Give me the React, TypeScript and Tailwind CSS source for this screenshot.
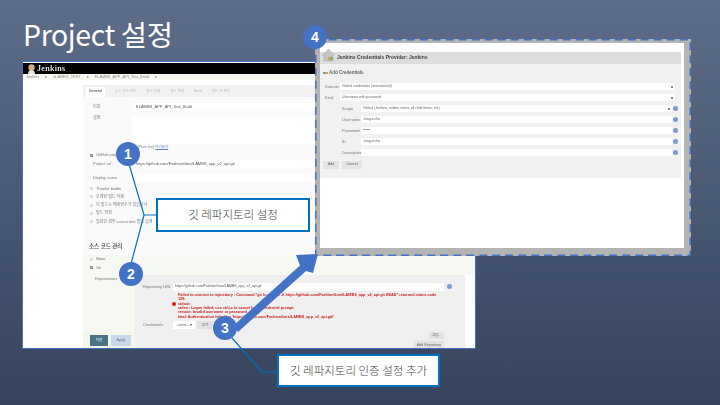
const KR = "font-['Liberation_Sans','Noto_Sans_CJK_KR',sans-serif]";

function Field({ label, value, h = "h-[8px]", top = "mt-0" }: { label: string; value?: string; h?: string; top?: string }) {
  return (
    <div className={`flex items-center ${top}`}>
      <span className="w-[50px] pl-[10px] text-[4px] text-[#777]">{label}</span>
      <div className={`flex flex-1 items-center bg-white px-[3px] text-[4px] text-[#555] ${h}`}>{value}</div>
    </div>
  );
}

function Check({ label, checked }: { label: string; checked?: boolean }) {
  return (
    <div className="flex h-[8.3px] items-center gap-[3px] pl-[7px] text-[4px] text-[#777]">
      <span className={`size-[3px] ${checked ? "bg-[#999]" : "bg-[#ddd]"}`} />
      {label}
    </div>
  );
}

function JenkinsConfig() {
  return (
    <div className="absolute left-[22px] top-[61px] flex h-[288px] w-[454px] flex-col overflow-hidden border border-[#4472c4] bg-white blur-[0.4px]">
      <div className="mt-[1px] flex h-[11px] items-center gap-[1px] bg-black pl-[4px] font-['Liberation_Serif',serif] text-[8px] font-bold tracking-[0.3px] text-[#ddd]">
        <svg width="9" height="10" viewBox="0 0 9 10">
          <circle cx="4.5" cy="3.5" r="3.2" fill="#d2ab86" />
          <path d="M1 10 C1 7 2.5 6 4.5 6 C6.5 6 8 7 8 10 Z" fill="#e8e4dc" />
        </svg>
        Jenkins
      </div>
      <div className="flex h-[7px] items-center gap-[6px] bg-[#f4f8f0] pl-[3px] text-[3.9px] text-[#888]">
        <span>Jenkins</span>
        <span>▸</span>
        <span>eLAMBS_TEST</span>
        <span>▸</span>
        <span>ELAMBS_APP_API_Test_Build</span>
        <span>▸</span>
      </div>
      <div className="flex flex-1">
        <div className="w-[60px]" />
        <div className="flex flex-1 flex-col pt-[5px]">
          <div className="flex h-[12px] items-end gap-[10px] bg-[#f1f1f1] pl-[3px] text-[3.5px] text-[#bbb]">
            <span className="flex h-[10px] w-[19px] items-center justify-center bg-white font-bold text-[#666]">General</span>
            <span className="pb-[3px]">소스 코드 관리</span>
            <span className="pb-[3px]">빌드 유발</span>
            <span className="pb-[3px]">빌드 환경</span>
            <span className="pb-[3px]">Build</span>
            <span className="pb-[3px]">빌드 후 조치</span>
          </div>
          <div className="flex flex-1 flex-col bg-[#fafafa]">
            <Field label="이름" value="ELAMBS_APP_API_Test_Build" top="mt-[6px]" />
            <div className="mt-[4px] flex">
              <span className="w-[50px] pl-[10px] text-[4px] text-[#777]">설정</span>
              <div className="h-[29px] flex-1 bg-white" />
            </div>
            <div className="ml-[55px] mt-[1px] text-[3.5px] text-[#888]">
              [Plain text] <span className="text-[#5a7fc0] underline">미리보기</span>
            </div>
            <div className="mt-[1px]">
              <Check label="GitHub project" checked />
            </div>
            <Field label="Project url" value="https://github.com/FashionGore/LAMBS_app_v2_api.git" top="mt-[1px]" />
            <Field label="Display name" top="mt-[6px]" />
            <div className="mt-[2px]">
              <Check label="Throttle builds" />
              <Check label="오래된 빌드 삭제" />
              <Check label="이 빌드는 매개변수가 있습니다" />
              <Check label="빌드 안함" />
              <Check label="필요한 경우 concurrent 빌드 실행" />
            </div>
            <div className="mt-[16px] pl-[6px] text-[5.5px] font-bold text-[#555]">소스 코드 관리</div>
            <div className="mt-[5px] flex flex-1 flex-col bg-[#f6f8f2]">
              <Check label="None" />
              <Check label="Git" checked />
              <div className="relative mt-[3px] flex flex-1">
                <div className="w-[52px] pl-[12px] pt-[1px] text-[4px] text-[#777]">Repositories</div>
                <div className="flex flex-1 flex-col bg-[#efefef] pl-[8px] pt-[8px]">
                  <div className="flex items-center">
                    <span className="w-[30px] text-[4px] text-[#777]">Repository URL</span>
                    <div className="flex h-[8px] w-[271px] items-center bg-white px-[2px] text-[3.5px] text-[#555]">
                      https://github.com/FashionGore/LAMBS_app_v2_api.git
                    </div>
                    <span className="ml-[3px] size-[5px] rounded-full bg-[#7f9ad0]" />
                  </div>
                  <div className="relative ml-[35px] mt-[2px] w-[262px] text-[3.75px] font-bold leading-[4.4px] text-[#cc1f1f]">
                    <span className="absolute -left-[6px] top-[9px] size-[4px] rounded-full bg-[#d81e1e]" />
                    <div className="whitespace-nowrap">Failed to connect to repository : Command "git ls-remote -h https://github.com/FashionGore/LAMBS_app_v2_api.git HEAD" returned status code</div>
                    <div>128:</div>
                    <div>stdout:</div>
                    <div>stderr: Logon failed, use ctrl+c to cancel basic credential prompt.</div>
                    <div>remote: Invalid username or password.</div>
                    <div>fatal: Authentication failed for 'https://github.com/FashionGore/LAMBS_app_v2_api.git/'</div>
                  </div>
                  <div className="mt-[2px] flex items-center">
                    <span className="w-[30px] text-[4px] text-[#777]">Credentials</span>
                    <div className="flex h-[8px] w-[22px] items-center justify-center bg-white text-[3.5px] text-[#555]">- none - ▾</div>
                    <div className="ml-[2px] flex h-[8px] w-[16px] items-center justify-center bg-[#e2e2e2] text-[3.5px] text-[#666]">추가</div>
                  </div>
                  <div className="mt-[3px] flex w-[301px] justify-end">
                    <div className="flex h-[7px] w-[15px] items-center justify-center bg-[#e2e2e2] text-[3.5px] text-[#666]">고급...</div>
                  </div>
                  <div className="mt-[2px] flex w-[301px] justify-end">
                    <div className="flex h-[8px] w-[30px] items-center justify-center bg-[#e2e2e2] text-[3.5px] text-[#666]">Add Repository</div>
                  </div>
                </div>
                <div className="w-[10px] bg-white" />
                {/* sticky save bar sits over the left column */}
                <div className="absolute bottom-0 left-0 flex h-[17px] w-[52px] items-center gap-[3px] bg-[#f3f6ea] pl-[7px]">
                  <span className="flex h-[11px] w-[18px] items-center justify-center bg-[#4a7384] text-[3.5px] text-white">저장</span>
                  <span className="flex h-[11px] w-[20px] items-center justify-center bg-[#c7d7ec] text-[3.5px] text-[#667]">Apply</span>
                </div>
              </div>
            </div>
          </div>
        </div>
      </div>
    </div>
  );
}

function CredRow({ label, value, inset, help, select }: { label: string; value?: string; inset?: boolean; help?: boolean; select?: boolean }) {
  return (
    <div className="flex h-[11px] items-center">
      <span className={`shrink-0 whitespace-nowrap text-[4px] text-[#777] ${inset ? "w-[38px] pl-[19px]" : "w-[17px] pl-[2px]"}`}>{label}</span>
      <div className={`flex h-[7px] flex-1 items-center justify-between bg-white px-[2px] text-[3.5px] text-[#666] ${help ? "" : "mr-[3px]"}`}>
        <span>{value}</span>
        {select && <span className="size-[2px] bg-[#888]" />}
      </div>
      {help && <span className="ml-[1px] size-[5px] shrink-0 rounded-full bg-[#7f9ad0]" />}
    </div>
  );
}

function CredentialsWindow() {
  return (
    <div className="absolute left-[315px] top-[39px] h-[217px] w-[376px] bg-[#b4b4b4] pb-[8px] pl-[5px] pr-[7px] pt-[4px]">
      <div className="flex h-full flex-col bg-white blur-[0.4px]">
        <div className="h-[9px]" />
        <div className="relative mr-[3px] flex h-[12px] items-center bg-[#dcdddf] pl-[17px] text-[5px] font-bold text-[#444]">
          <svg className="absolute -top-[4px] left-[2px]" width="13" height="14" viewBox="0 0 13 14">
            <path d="M0.5 7 L6.5 1 L12.5 7 L11 7 L11 13 L2 13 L2 7 Z" fill="#c4c4c4" stroke="#a5a5a5" strokeWidth="0.5" />
            <rect x="6" y="9" width="2" height="3" fill="#d8a23a" />
            <rect x="8.5" y="9" width="2" height="3" fill="#6fa15a" />
          </svg>
          Jenkins Credentials Provider: Jenkins
        </div>
        <div className="mr-[3px] h-[114px] bg-[#f1f1f1] px-[3px] pt-[6px]">
          <div className="flex h-[6px] items-center text-[4.5px] font-bold text-[#666]">
            <span className="size-[2px] rounded-full bg-[#4472c4]" />
            <span className="mr-[1px] h-[2px] w-[3px] bg-[#d0a83c]" />
            Add Credentials
          </div>
          <div className="mt-[5px]">
            <CredRow label="Domain" value="Global credentials (unrestricted)" select />
            <CredRow label="Kind" value="Username with password" select />
            <CredRow label="Scope" value="Global (Jenkins, nodes, items, all child items, etc)" inset help select />
            <CredRow label="Username" value="Jung-incho" inset help />
            <CredRow label="Password" value="••••••" inset help />
            <CredRow label="ID" value="Jung-incho" inset help />
            <CredRow label="Description" inset help />
          </div>
          <div className="mt-[3px] flex gap-[3px]">
            <span className="flex h-[8px] w-[16px] items-center justify-center bg-[#e4e4e4] text-[3.5px] text-[#666]">Add</span>
            <span className="flex h-[8px] w-[20px] items-center justify-center bg-[#e4e4e4] text-[3.5px] text-[#666]">Cancel</span>
          </div>
        </div>
      </div>
      {/* selection outline, longer dashes than a css dashed border */}
      <svg className="absolute inset-0" width="376" height="217" fill="none">
        <rect x="0.75" y="0.75" width="374.5" height="215.5" stroke="#4472c4" strokeWidth="1.5" strokeDasharray="8 5" />
      </svg>
    </div>
  );
}

function Badge({ n, className }: { n: number; className: string }) {
  return (
    <div className={`absolute flex size-[24px] items-center justify-center rounded-full bg-[#4472c4] text-[14px] font-bold text-white ${className}`}>
      {n}
    </div>
  );
}

export default function App() {
  return (
    <div className={`relative h-[405px] w-[720px] overflow-hidden bg-gradient-to-b from-[#5e6e8a] to-[#36445d] ${KR}`}>
      <h1 className="pl-[23px] pt-[15px] font-['Noto_Sans_CJK_KR',sans-serif] text-[28.5px] font-normal leading-[38px] tracking-[-0.4px] text-white">
        Project 설정
      </h1>

      <JenkinsConfig />

      {/* connector lines and the big arrow */}
      <svg className="absolute left-0 top-0" width="720" height="405" viewBox="0 0 720 405" fill="none">
        <path d="M129 164 L144 215 L156 215 M144 215 L131 264" stroke="#0070c0" strokeWidth="1.2" />
        <path d="M232 338 L262 372 L277 372" stroke="#0070c0" strokeWidth="1.2" />
        <path d="M233 326 L300 265.5 L296 255 L318 254 L313 273 L306 271 L238 332 Z" fill="#4472c4" />
      </svg>

      <CredentialsWindow />

      <div className="absolute left-[156px] top-[198px] flex h-[34px] w-[154px] items-center justify-center border-2 border-[#0070c0] bg-white font-['Noto_Sans_CJK_KR',sans-serif] text-[11.5px] font-light text-[#444]">
        깃 레파지토리 설정
      </div>
      <div className="absolute left-[277px] top-[354px] flex h-[33px] w-[163px] items-center justify-center border-2 border-[#0070c0] bg-white font-['Noto_Sans_CJK_KR',sans-serif] text-[11.5px] font-light text-[#444]">
        깃 레파지토리 인증 설정 추가
      </div>

      <Badge n={1} className="left-[116px] top-[142px]" />
      <Badge n={2} className="left-[119px] top-[262px]" />
      <Badge n={3} className="left-[213px] top-[316px]" />
      <Badge n={4} className="left-[303px] top-[25px]" />
    </div>
  );
}
